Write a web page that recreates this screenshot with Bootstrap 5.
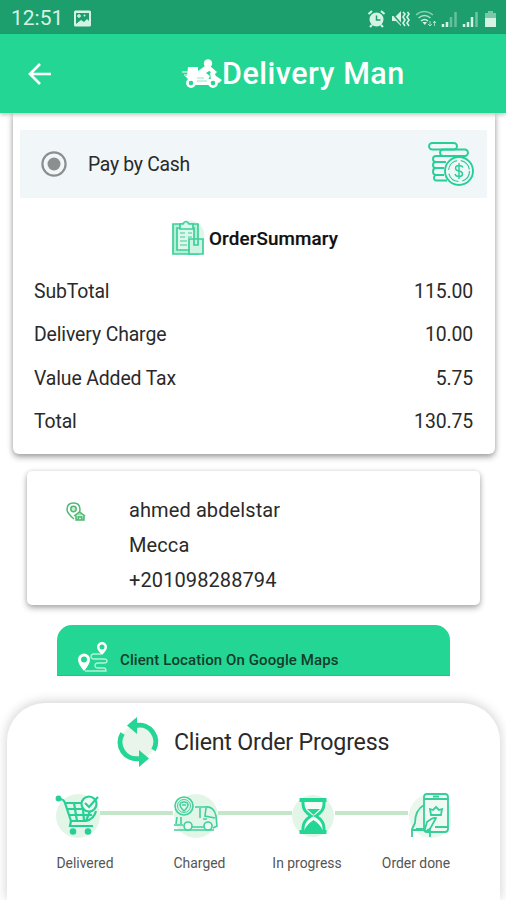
<!DOCTYPE html>
<html lang="en">
<head>
<meta charset="utf-8">
<meta name="viewport" content="width=device-width, initial-scale=1">
<title>Delivery Man</title>
<link href="https://cdn.jsdelivr.net/npm/bootstrap@5.3.0/dist/css/bootstrap.min.css" rel="stylesheet">
<style>
:root { --brand: #24d693; --brand-dark: #1c9f6d; }
body { font-family: Roboto, "Liberation Sans", sans-serif; color: #2a2a2a; background: #fff; }
svg { display: block; flex: none; }
.screen { width: 506px; height: 900px; }
.status-bar { height: 34px; background: var(--brand-dark); color: #d5f3e5; padding: 3px 8px 0 11px; }
.clock { font-size: 21px; line-height: 31px; width: 63px; }
.top-bar { height: 79px; background: var(--brand); padding-left: 27px; box-shadow: 0 2px 4px rgba(0,0,0,.22); z-index: 2; }
.brand-group { margin-left: 130px; }
.top-title { font-size: 30.5px; font-weight: 500; line-height: 36px; letter-spacing: .5px; padding-top: 1px; }
.summary-card { margin: 0 11px 0 13px; height: 341px; border-radius: 0 0 6px 6px; background: #fff; padding: 17px 8px 0 7px; box-shadow: 0 3px 6px rgba(0,0,0,.36), 0 0 5px rgba(0,0,0,.1); }
.pay-row { height: 68px; background: #f1f6f9; padding: 0 13px 0 20px; }
.body-text { font-size: 19.4px; line-height: 24px; letter-spacing: -.12px; }
.pay-label { margin-left: 20px; padding-top: 2px; letter-spacing: -.3px; }
.heading-row { height: 40px; margin-top: 20px; margin-left: 151px; gap: 4px; }
.heading-text { font-size: 18.8px; font-weight: 500; color: #111; letter-spacing: .15px; padding-top: 3px; -webkit-text-stroke: .2px #111; }
.sum-lines { margin: 12px 14px 0 14px; }
.sum-line { height: 43.5px; }
.client-card { margin: 17px 26px 0 27px; height: 134px; border-radius: 5px; background: #fff; padding: 22px 0 0 39px; box-shadow: 0 3px 6px rgba(0,0,0,.32), 0 0 4px rgba(0,0,0,.1); }
.client-lines { font-size: 20px; line-height: 35px; margin-left: 43px; letter-spacing: .1px; }
.client-pin { margin-top: 9px; }
.maps-btn { margin: 20px 56px 0 57px; height: 51px; border-radius: 15px 15px 0 0; background: var(--brand); border-bottom: 1px solid #16cb85; padding: 16px 0 0 20px; }
.maps-text { font-size: 15px; font-weight: 500; color: #123d2b; line-height: 20px; letter-spacing: .1px; margin: 9px 0 0 12px; }
.progress-sheet { margin: 27px 6px 0 7px; height: 197px; border-radius: 38px 38px 0 0; background: #fff; box-shadow: 0 -1px 12px rgba(0,0,0,.2); }
.progress-head { padding: 13px 0 0 109px; height: 65px; gap: 14px; }
.progress-title { font-size: 23.2px; line-height: 28px; letter-spacing: -.22px; }
.step-icons { padding: 22px 49px 0 48px; }
.connector { height: 4px; background: #c5e7c9; margin-top: -4px; }
.step-labels { display: grid; grid-template-columns: 114px 115px 100px 118px; padding-left: 21px; font-size: 13.9px; line-height: 18px; color: #555; margin-top: 14px; }
</style>
</head>
<body>
<main class="screen overflow-hidden d-flex flex-column">
  <div class="status-bar d-flex align-items-center flex-shrink-0">
    <span class="clock">12:51</span>
    <svg width="17" height="17" viewBox="0 0 17 17"><rect width="17" height="16" y=".5" rx="1.5" fill="#d5f3e5"/><path d="M2 3h13v8l-2-2-3 3-3-2-5 4z" fill="#1c9f6d"/><path d="M5 4v4M3 6h4" stroke="#d5f3e5" stroke-width="1.4"/><circle cx="10.500" cy="5.500" r="1" fill="#d5f3e5"/></svg>
    <svg class="ms-auto" width="131" height="20" viewBox="0 0 131 20" fill="none" stroke="#d5f3e5">
      <circle cx="9.500" cy="10.500" r="7" fill="#d5f3e5" stroke="none"/><path d="M9.500 6.500v4.500h4" stroke="#1c9f6d" stroke-width="1.500"/><path d="M1.500 5 5 2M14 2l3.500 3M5 16l-2 2M14 16l2 2" stroke-width="2.200"/>
      <path d="M25 7h4l5-5v15l-5-5h-4z" fill="#d5f3e5" stroke="none"/><path d="m24 3 12 14" stroke="#1c9f6d" stroke-width="1.500"/><path d="m36 3 2 2-2 3 2 3-2 3 2 3M40.500 3l1.500 2-2 3 2 3-2 3 2 3" stroke-width="1.600"/>
      <g stroke-width="1.500"><path d="M49 6q8-7 17 0" opacity=".55"/><path d="M51.500 9q6-5 12 0" opacity=".8"/><path d="M54 12q3.500-3 7 0"/></g><path d="m55.500 13 2.300 3 2.200-3z" fill="#d5f3e5" stroke="none"/><path d="M63 12v5m-2-2 2 2 2-2M67.500 17v-5m-1.500 2 1.500-2 1.500 2" opacity=".7"/>
      <g stroke-width="2.500"><path d="M76 18v-3M80 18v-5"/><path d="M84 18V8M88.500 18V3" opacity=".4"/><path d="M97 18v-3M101 18v-5M105 18V8"/><path d="M109.500 18V3" opacity=".45"/></g>
      <path d="M118 4h3V2h5v2h3v6h-11z" fill="#d5f3e5" opacity=".5" stroke="none"/><path d="M118 9h11v9h-11z" fill="#d5f3e5" stroke="none"/>
    </svg>
  </div>
  <header class="top-bar d-flex align-items-center flex-shrink-0 text-white position-relative">
    <svg width="25" height="26" viewBox="0 0 25 26" fill="none" stroke="#fff" stroke-width="2.700"><path d="M24 13H3.500M13 3 3 13l10 10"/></svg>
    <div class="brand-group d-flex align-items-center">
      <svg width="40" height="32" viewBox="0 0 40 32"><g fill="#fff"><circle cx="26" cy="5.500" r="4.200"/><path d="M6 9h10v9H5zM16 13l7-5h5l7 6-2 2-6-3-3 2 4 3-2 4-8-4-4 1zM3 18h16l5 3h5l-1-6 3-2 3 5 6 4-3 3-5-2-4 4H13l-4-3z"/></g><g stroke="#fff" fill="#24d693"><path d="M0 14h6M2 17h4" stroke-width="1.200"/><circle cx="9" cy="25" r="3.600" stroke-width="2.600"/><circle cx="31" cy="25" r="3.600" stroke-width="2.600"/></g><path d="M15 20h7M15 23h10" stroke="#8be8c4"/></svg>
      <span class="top-title">Delivery Man</span>
    </div>
  </header>

  <section class="summary-card flex-shrink-0">
    <div class="pay-row d-flex align-items-center">
      <svg width="28" height="28" viewBox="0 0 28 28"><circle cx="14" cy="14" r="11.600" fill="none" stroke="#8c8f90" stroke-width="2.200"/><circle cx="14" cy="14" r="6.500" fill="#8c8f90"/></svg>
      <span class="body-text pay-label">Pay by Cash</span>
      <svg class="ms-auto" width="48" height="48" viewBox="0 0 48 48" fill="none" stroke="#25cf95" stroke-width="1.900"><rect x="3" y="3" width="28" height="6.500" rx="3.200"/><rect x="14" y="9.500" width="28" height="6.500" rx="3.200"/><path d="M20 16H10q-3 0-3 3t3 3h10M10 22q-3 0-3 3t3 3h8M10 28q-3 0-3 3.500t3 3.500h8M10 35q-2 0-2 3t3 2.500h10"/><circle cx="33" cy="31" r="14" fill="#f1f6f9"/><circle cx="33" cy="31" r="10.500" stroke-width="1.200" stroke-dasharray="13 4"/><path d="M37 27.500q-1-2-4-2-3.500 0-3.500 2.700 0 2.300 3.500 2.800t3.500 3q0 2.500-3.500 2.500-3.300 0-4-2.500M33 23v16" stroke-width="1.400"/></svg>
    </div>
    <div class="heading-row d-flex align-items-center">
      <svg width="34" height="38" viewBox="0 0 34 38"><circle cx="18" cy="17" r="15.500" fill="#dff6e8"/><g fill="none" stroke="#3ccf9c" stroke-width="1.700"><path d="M2 5h25v30H2z" fill="#b4efd6"/><path d="M6 9h17v22H6z" fill="#ddf7ea"/><path d="M9 10V5h3q3-5 6 0h4v5z" fill="#ddf7ea"/><path d="M9 14h5m3 0h4M9 18h5m3 0h4M9 22h7M9 26h7" stroke-width="1.200"/><path d="M18 20h14v15H18z" fill="#cff3e2"/><path d="M23 20v6h4v-6"/></g></svg>
      <span class="heading-text">OrderSummary</span>
    </div>
    <div class="sum-lines body-text">
      <div class="sum-line d-flex align-items-center justify-content-between"><span>SubTotal</span><span>115.00</span></div>
      <div class="sum-line d-flex align-items-center justify-content-between"><span>Delivery Charge</span><span>10.00</span></div>
      <div class="sum-line d-flex align-items-center justify-content-between"><span>Value Added Tax</span><span>5.75</span></div>
      <div class="sum-line d-flex align-items-center justify-content-between"><span>Total</span><span>130.75</span></div>
    </div>
  </section>

  <section class="client-card d-flex flex-shrink-0">
    <svg class="client-pin" width="20" height="20" viewBox="0 0 20 20" fill="none" stroke="#4cba72" stroke-width="1.500"><path d="M8 17Q1 11 1 7.500 1 1 7.500 1T14 7.500q0 1-.5 2.500"/><circle cx="7.500" cy="7" r="2.700" fill="#c8edcf"/><path d="m8 14 5.500-4 5.500 4M10 13.500V18h8v-4.500M12.500 18v-3h3v3" fill="#a9dfb8"/></svg>
    <div class="client-lines"><div>ahmed abdelstar</div><div>Mecca</div><div>+201098288794</div></div>
  </section>

  <a class="maps-btn d-flex flex-shrink-0 text-decoration-none" href="#">
    <svg width="31" height="32" viewBox="0 0 31 32"><g fill="#fff" fill-rule="evenodd"><path d="M7 30Q1 23 1 18.500a6 6 0 0 1 12 0q0 4.500-6 11.500zM7 15.500a3 3 0 1 0 0 6 3 3 0 0 0 0-6z"/><path d="M25 14q-5-5-5-8a5 5 0 0 1 10 0q0 3-5 8zM25 3.500a2.500 2.500 0 1 0 0 5 2.500 2.500 0 0 0 0-5z"/></g><path d="M24 13h-7q-3 0-3 2.500t3 2.500h10q3 0 3 2t-3 2h-6q-3 0-3 2.500t3 2.500h6q2 0 2 3H8" fill="none" stroke="#d4f9e9" stroke-width="1.300" opacity=".8"/></svg>
    <span class="maps-text">Client Location On Google Maps</span>
  </a>

  <section class="progress-sheet flex-shrink-0">
    <div class="progress-head d-flex align-items-center">
      <svg width="44" height="52" viewBox="0 0 44 52"><circle cx="22" cy="26" r="17" fill="#e9f4ea"/><g fill="none" stroke="#24d693" stroke-width="5"><path d="M20 9.500A16.500 16.500 0 0 1 37.500 34M23 42.500A16.500 16.500 0 0 1 6.500 17.500"/></g><path d="M21 1v17L11 9.500zM23 34v17l10-8.500z" fill="#24d693"/></svg>
      <h1 class="progress-title fw-normal mb-0">Client Order Progress</h1>
    </div>
    <div class="step-icons d-flex align-items-center">
      <svg width="45" height="50" viewBox="0 0 45 50"><circle cx="23" cy="26" r="22" fill="#e2f6e8"/><g fill="none" stroke="#25cf95" stroke-width="2.200"><path d="M4 9q5 0 6 4l6 18h15q8-2 10-10M10 13h17M12 19h26M14 25h23M19 13l3 18M28 19l1 12M35 21l-4 10M16 31l-1 5h23"/><circle cx="3.500" cy="8.500" r="1.800" fill="#25cf95"/><circle cx="18" cy="41.500" r="2.200" fill="#25cf95"/><circle cx="33" cy="41.500" r="2.200" fill="#25cf95"/><circle cx="34" cy="14" r="7.500" fill="#edfaf2"/><path d="m30 13 4 4 9-10"/></g></svg>
      <span class="connector flex-grow-1"></span>
      <svg width="45" height="50" viewBox="0 0 45 50"><circle cx="23" cy="26" r="22" fill="#e2f6e8"/><g fill="none" stroke="#40cf9d" stroke-width="1.600"><circle cx="11" cy="16" r="9" fill="#e2f6e8"/><circle cx="11" cy="16" r="6.500" stroke-width="1"/><path d="M11 21q-4-4-4-6 0-3 4-3t4 3q0 2-4 6zM9 15h4M22 17h10q9-1 11 9l1 10-4 2M27 18v10M33 18l-1 8 10 2M34 29h-4M19 37h12M4 27l-1 7m5-7v7M1 35h9M1 40h40"/><circle cx="15" cy="36" r="4" fill="#edfaf2"/><circle cx="35" cy="36" r="4" fill="#edfaf2"/></g></svg>
      <span class="connector flex-grow-1"></span>
      <svg width="43" height="50" viewBox="0 0 43 50"><circle cx="21" cy="26" r="21" fill="#e2f6e8"/><path d="M11 10v4q0 7 8 12-8 5-8 12v4h21v-4q0-7-8-12 8-5 8-12v-4z" fill="#f5fcf7" stroke="#24d693" stroke-width="3"/><path d="M7.500 8h27v4h-27zM7.500 40h27v4h-27z" fill="#24d693"/><path d="M15 19h13l-6.500 6zM12 41q2-6 9.500-11 7.500 5 9.500 11z" fill="#24d693"/></svg>
      <span class="connector flex-grow-1"></span>
      <svg width="43" height="50" viewBox="0 0 43 50"><circle cx="23" cy="26" r="22" fill="#e9f7ed"/><g fill="none" stroke="#39cd9b" stroke-width="1.800"><rect x="16" y="4" width="24" height="38" rx="3" fill="#effaf3"/><path d="M16 9h24M27 37h13M25 6.500h6M22 19l3 1 3-3 3 3 3-1-1 6H23zM16 15Q7 20 7 33l-3 6v8m0-7h18v7"/><path d="M8 39h9l2-7q6-5 9-4l-5 9q-1 3-4 3" fill="#effaf3"/></g></svg>
    </div>
    <div class="step-labels text-center"><span>Delivered</span><span>Charged</span><span>In progress</span><span>Order done</span></div>
  </section>
</main>
<script src="https://cdn.jsdelivr.net/npm/bootstrap@5.3.0/dist/js/bootstrap.bundle.min.js"></script>
</body>
</html>
